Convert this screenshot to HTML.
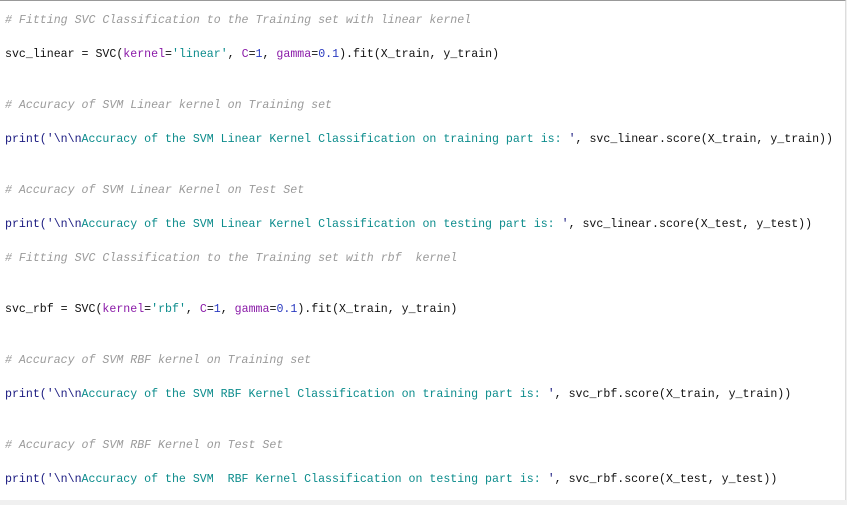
<!DOCTYPE html><html><head><style>
body{margin:0;width:847px;height:505px;background:#f0f0f0;position:relative;overflow:hidden}
#box{position:absolute;left:0;top:0;width:846px;height:500px;background:#fff;border-top:1px solid #999;border-right:1px solid #ddd;box-sizing:border-box}
.l{position:absolute;left:5px;font-family:"Liberation Mono",monospace;font-size:11.6px;white-space:pre;color:#111;line-height:14px}
.c{color:#9a9a9a;font-style:italic}
.k{color:#8a1aa8}.s{color:#0c8c8c}.n{color:#2a3ac0}.p{color:#1a1a80}
</style></head><body><div id="box"></div>
<div class="l c" style="top:14px"># Fitting SVC Classification to the Training set with linear kernel</div>
<div class="l" style="top:48px">svc_linear = SVC(<span class="k">kernel</span>=<span class="s">'linear'</span>, <span class="k">C</span>=<span class="n">1</span>, <span class="k">gamma</span>=<span class="n">0.1</span>).fit(X_train, y_train)</div>
<div class="l c" style="top:99px"># Accuracy of SVM Linear kernel on Training set</div>
<div class="l" style="top:133px"><span class="p">print('\n\n</span><span class="s">Accuracy of the SVM Linear Kernel Classification on training part is: </span><span class="p">'</span>, svc_linear.score(X_train, y_train))</div>
<div class="l c" style="top:184px"># Accuracy of SVM Linear Kernel on Test Set</div>
<div class="l" style="top:218px"><span class="p">print('\n\n</span><span class="s">Accuracy of the SVM Linear Kernel Classification on testing part is: </span><span class="p">'</span>, svc_linear.score(X_test, y_test))</div>
<div class="l c" style="top:252px"># Fitting SVC Classification to the Training set with rbf  kernel</div>
<div class="l" style="top:303px">svc_rbf = SVC(<span class="k">kernel</span>=<span class="s">'rbf'</span>, <span class="k">C</span>=<span class="n">1</span>, <span class="k">gamma</span>=<span class="n">0.1</span>).fit(X_train, y_train)</div>
<div class="l c" style="top:354px"># Accuracy of SVM RBF kernel on Training set</div>
<div class="l" style="top:388px"><span class="p">print('\n\n</span><span class="s">Accuracy of the SVM RBF Kernel Classification on training part is: </span><span class="p">'</span>, svc_rbf.score(X_train, y_train))</div>
<div class="l c" style="top:439px"># Accuracy of SVM RBF Kernel on Test Set</div>
<div class="l" style="top:473px"><span class="p">print('\n\n</span><span class="s">Accuracy of the SVM  RBF Kernel Classification on testing part is: </span><span class="p">'</span>, svc_rbf.score(X_test, y_test))</div>
</body></html>
